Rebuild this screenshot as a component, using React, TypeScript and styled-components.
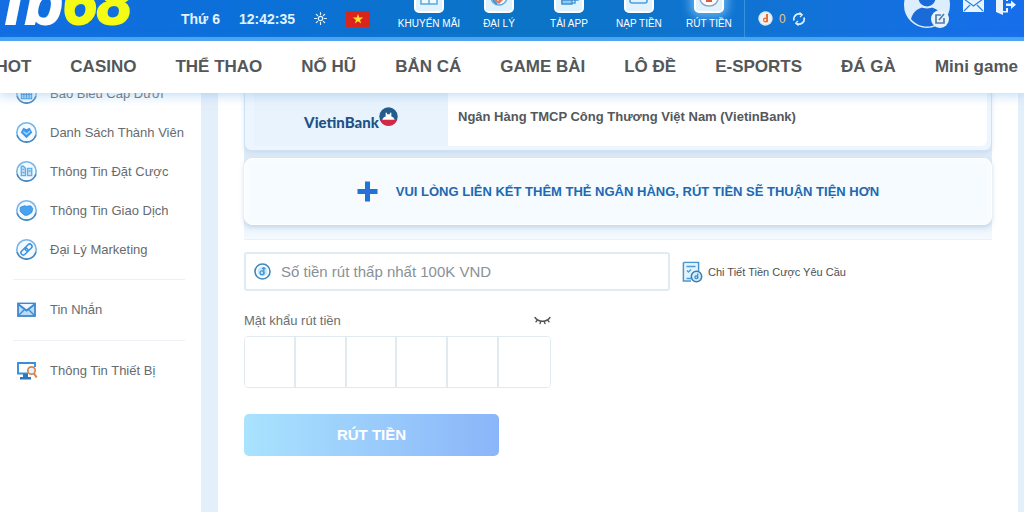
import React from "react";
import styled, { createGlobalStyle } from "styled-components";

const GlobalStyle = createGlobalStyle`
  *, *::before, *::after { box-sizing: border-box; }
  body {
    margin: 0;
    background: #fff;
    color: #5d6268;
    font-family: "Liberation Sans", Arial, sans-serif;
    font-size: 13px;
  }
  a { color: inherit; text-decoration: none; }
  button { font: inherit; border: 0; padding: 0; background: none; color: inherit; cursor: pointer; }
  svg { display: block; flex: none; }
`;

const Page = styled.div`
  min-height: 100vh;
  display: flex;
  flex-direction: column;
  overflow: hidden;
`;

/* ---------- top bar ---------- */

const TopBar = styled.header`
  height: 41px;
  display: flex;
  align-items: flex-end;
  overflow: hidden;
  color: #fff;
  border-bottom: 4px solid #45a3f3;
  background: linear-gradient(90deg, #126ee2 0%, #0b70d8 25%, #0b74c6 50%, #0f74d0 70%, #176eeb 100%);
`;

const Logo = styled.a`
  width: 181px;
  flex: none;
  padding-left: 4px;
  height: 64px;
  line-height: 60px;
  font-size: 62px;
  font-weight: bold;
  font-style: italic;
  white-space: nowrap;
  -webkit-text-stroke: 2px currentColor;
`;

const LogoAccent = styled.span`
  color: #f4fb14;
`;

const StatusGroup = styled.div`
  display: flex;
  align-items: center;
  gap: 19px;
  height: 37px;
  flex: none;
  font-size: 14px;
  font-weight: bold;
  color: #e2f2ff;
`;

const ActionList = styled.nav`
  display: flex;
  margin-left: 24px;
  padding-bottom: 7px;
  border-right: 1px solid #3b90e0;
`;

const Action = styled.a`
  width: 70px;
  display: flex;
  flex-direction: column;
  align-items: center;
  gap: 5px;
  font-size: 10px;
  line-height: 12px;
  white-space: nowrap;
`;

const ActionTile = styled.span<{ $active?: boolean }>`
  width: 30px;
  height: 30px;
  display: flex;
  align-items: flex-end;
  justify-content: center;
  padding-bottom: 3px;
  border-radius: 5px;
  border: 2px solid #fff;
  background: #dff2fe;
  box-shadow: ${(p) => (p.$active ? "0 0 10px 4px rgba(150, 215, 255, 0.6)" : "none")};
`;

const Balance = styled.div`
  display: flex;
  align-items: center;
  gap: 6px;
  height: 37px;
  margin-left: 13px;
  font-size: 12px;
  color: #e5c681;
`;

const Account = styled.div`
  display: flex;
  align-items: flex-start;
  gap: 12px;
  height: 55px;
  margin-left: auto;
  padding-right: 8px;
`;

const IconButton = styled.button`
  padding-top: 16px;
`;

const AvatarButton = styled.button`
  padding-top: 0;
`;

const RefreshButton = styled.button``;

/* ---------- main menu ---------- */

const MainMenu = styled.nav`
  position: relative;
  z-index: 1;
  height: 52px;
  display: flex;
  align-items: center;
  justify-content: flex-end;
  gap: 39px;
  padding-right: 6px;
  background: #fff;
  box-shadow: 0 3px 10px rgba(140, 190, 235, 0.5);
  font-size: 17px;
  font-weight: bold;
  color: #53575a;
  white-space: nowrap;
`;

/* ---------- body ---------- */

const Body = styled.div`
  flex: 1;
  display: flex;
  overflow: hidden;
  background: #e3effa;
`;

const Sidebar = styled.aside`
  width: 201px;
  flex: none;
  background: #fff;
`;

const SideList = styled.ul<{ $ruled?: boolean }>`
  list-style: none;
  margin: ${(p) => (p.$ruled ? "0 16px 0 13px" : "-19px 16px 0 13px")};
  padding: ${(p) => (p.$ruled ? "10px 0 11px" : "0 0 10px")};
  border-top: ${(p) => (p.$ruled ? "1px solid #edf1f5" : "0")};
`;

const SideLink = styled.a`
  height: 39px;
  display: flex;
  align-items: center;
  gap: 12px;
  padding-left: 2px;
  white-space: nowrap;
  color: #666b70;
`;

const Main = styled.main`
  flex: 1;
  min-width: 0;
  margin: 0 6px 0 17px;
  padding: 0 26px 56px;
  background: #fff;
`;

const BankArea = styled.section`
  margin-top: -13px;
  padding-bottom: 14px;
  border-bottom: 1px solid #efeff4;
  background: linear-gradient(#e0ecf8 85%, #f5faff);
`;

const BankCard = styled.div`
  display: flex;
  padding: 5px 4px 4px 9px;
  border: 1px solid #cfe1f3;
  border-radius: 0 0 7px 7px;
  background: #edf6fe;
  box-shadow: 0 2px 5px rgba(150, 185, 220, 0.3);
`;

const BankLogo = styled.div`
  width: 194px;
  flex: none;
  display: flex;
  align-items: center;
  justify-content: center;
  background: #e9f3fd;
`;

const BankWordmark = styled.span`
  margin-top: 12px;
  font-family: Lato, "Liberation Sans", sans-serif;
  font-size: 15px;
  font-weight: 900;
  color: #1d5285;
`;

const BankName = styled.div`
  flex: 1;
  height: 60px;
  display: flex;
  align-items: center;
  padding-left: 10px;
  border-radius: 0 0 6px 0;
  background: #fff;
  font-weight: bold;
  color: #54585c;
`;

const AddCardButton = styled.button`
  width: 100%;
  height: 67px;
  margin-top: 7px;
  display: flex;
  align-items: center;
  justify-content: center;
  gap: 18px;
  border: 1px solid #fff;
  border-radius: 8px;
  background: #f5fbff;
  box-shadow: 0 2px 5px rgba(125, 165, 205, 0.4), inset 0 0 0 5px #f8fcff;
  font-weight: bold;
  color: #2069b2;
`;

const AmountRow = styled.div`
  display: flex;
  align-items: center;
  gap: 12px;
  margin-top: 12px;
`;

const AmountField = styled.label`
  flex: 0 1 426px;
  height: 39px;
  display: flex;
  align-items: center;
  gap: 10px;
  padding: 0 8px;
  border: 2px solid #dfecf4;
  border-radius: 3px;
  background: #fff;
`;

const AmountInput = styled.input`
  flex: 1;
  min-width: 0;
  border: 0;
  outline: 0;
  padding: 0;
  font: 15px "Liberation Sans", Arial, sans-serif;
  color: #54585c;
  &::placeholder { color: #8a9097; opacity: 1; }
`;

const DetailLink = styled.a`
  display: flex;
  align-items: center;
  gap: 5px;
  font-size: 11px;
  color: #4c5054;
  white-space: nowrap;
`;

const PinGroup = styled.fieldset`
  width: 307px;
  max-width: 100%;
  min-width: 0;
  margin: 21px 0 0;
  padding: 0;
  border: 0;
`;

const PinHead = styled.div`
  display: flex;
  align-items: center;
  justify-content: space-between;
  height: 16px;
  color: #6a6f74;
`;

const PinCells = styled.div`
  display: grid;
  grid-template-columns: repeat(6, minmax(0, 1fr));
  height: 52px;
  margin-top: 8px;
  border: 1px solid #e1eaef;
  border-radius: 4px;
  overflow: hidden;
`;

const PinInput = styled.input`
  width: 100%;
  border: 0;
  border-radius: 0;
  outline: 0;
  padding: 0;
  text-align: center;
  font-size: 20px;
  background: #fff;
  &:not(:last-child) { border-right: 2px solid #e1eaef; }
`;

const SubmitButton = styled.button`
  display: block;
  width: 255px;
  height: 42px;
  margin-top: 26px;
  padding-bottom: 2px;
  border-radius: 5px;
  background: linear-gradient(90deg, #a9e3fe, #8bb5f9);
  font-size: 15px;
  font-weight: bold;
  color: #fff;
`;

/* ---------- icons ---------- */

const SunIcon = () => (
  <svg width="13" height="13" viewBox="0 0 13 13" fill="none" stroke="#e2f2ff" strokeWidth="1.2" strokeLinecap="round">
    <circle cx="6.5" cy="6.5" r="2.2" />
    <path d="M6.5.6v2M6.5 10.4v2M.6 6.5h2M10.4 6.5h2M2.3 2.3l1.4 1.4M9.3 9.3l1.4 1.4M10.7 2.3L9.3 3.7M3.7 9.3l-1.4 1.4" />
  </svg>
);

const FlagIcon = () => (
  <svg width="24" height="16" viewBox="0 0 24 16">
    <rect width="24" height="16" fill="#d9251c" />
    <path fill="#ffe22e" d="M12 2.900l1.250 3.700h3.900L14 8.900l1.200 3.700L12 10.300l-3.200 2.300L10 8.900 6.850 6.600h3.900z" />
  </svg>
);

const tileArt: Record<string, React.ReactNode> = {
  gift: <path d="M2 5h16v11H2zM1 1h18v4H1zM10 1v15" fill="#eefaff" stroke="#5aa9dc" strokeWidth="1.500" />,
  agent: (
    <>
      <circle cx="10" cy="9" r="8" fill="#fff" stroke="#63aee0" strokeWidth="1.500" />
      <path d="M4 8l5 5 7-7v4l-6 6-5-4z" fill="#e9745a" />
      <path d="M4 12l4 4M13 4l3 3" stroke="#3f8fd0" strokeWidth="1.800" />
    </>
  ),
  app: (
    <>
      <path d="M3 0h13v15H3z" fill="#e6f5fe" stroke="#4f9fda" strokeWidth="1.600" />
      <path d="M3 12h10v4H3zM12 7h7v5h-7z" fill="#8fcbf2" stroke="#3f90d0" strokeWidth="1.300" />
    </>
  ),
  deposit: (
    <>
      <path d="M1 0v13q0 2 2 2h13q2 0 2-2V3H1" fill="#dff2fe" stroke="#4f9fda" strokeWidth="1.600" />
      <path d="M12 6h7v5h-7q-2-2.500 0-5z" fill="#b5def7" stroke="#4f9fda" strokeWidth="1.200" />
    </>
  ),
  withdraw: (
    <>
      <path d="M1 5v5c0 5 4 8 9 8s9-3 9-8V5z" fill="#fff" stroke="#8fa9bb" strokeWidth="1.500" />
      <path d="M7 2h6v12H7z" fill="#e3573e" />
      <path d="M9 4v8M11 4v8" stroke="#ffb09a" strokeWidth=".8" />
    </>
  ),
};

const TileIcon = ({ kind }: { kind: string }) => (
  <svg width="20" height="20" viewBox="0 0 20 20">{tileArt[kind]}</svg>
);

const CoinIcon = () => (
  <svg width="15" height="15" viewBox="0 0 15 15">
    <circle cx="7.500" cy="7.500" r="7.200" fill="#d7ebf8" />
    <circle cx="7.500" cy="7.500" r="5.600" fill="#f4f1ee" />
    <path d="M8 3h2v8c-2 1-5 .5-5-2s2-3 3-2z" fill="#e2703a" />
    <circle cx="7.200" cy="9" r="1" fill="#fff" />
  </svg>
);

const RefreshIcon = () => (
  <svg width="14" height="14" viewBox="0 0 14 14" fill="none" stroke="#dff1ff" strokeWidth="1.700">
    <path d="M2 8.500A5.200 5.200 0 0 1 9.500 2.500M12 5.500A5.200 5.200 0 0 1 4.500 11.500" />
    <path d="M7.500.5l2.800 2.200-2.300 2.500M6.500 13.500l-2.800-2.200 2.300-2.500" strokeWidth="1.200" />
  </svg>
);

const AvatarIcon = () => (
  <svg width="48" height="48" viewBox="0 0 48 48">
    <circle cx="24" cy="23" r="22" fill="#dcedfb" stroke="#dcedfb" strokeWidth="2" />
    <path d="M8 37c2-8 8-12 16-12s14 4 16 12c-4 5-10 7.500-16 7.500S12 42 8 37z" fill="#1a6ad8" />
    <circle cx="24" cy="16" r="9.500" fill="#1a6ad8" stroke="#dcedfb" strokeWidth="2" />
    <circle cx="37" cy="37" r="9" fill="#e6f3fd" />
    <path d="M38 33h-5v8h8v-5M36 38l5-6" fill="none" stroke="#4f7ea8" strokeWidth="1.700" />
  </svg>
);

const TopMailIcon = () => (
  <svg width="21" height="14" viewBox="0 0 21 14">
    <rect width="21" height="14" rx="1" fill="#e7f5ff" />
    <path d="M1 1l9.500 7L20 1M1 13l6-6M20 13l-6-6" fill="none" stroke="#2d7fe0" strokeWidth="1.200" />
  </svg>
);

const LogoutIcon = () => (
  <svg width="20" height="17" viewBox="0 0 20 17">
    <path d="M0 0h12v3h-2V1.500H7V13h3v-3h2v4.500H7V17L0 14z" fill="#e7f5ff" />
    <path d="M10 5.500h5V2.500L20 6.800l-5 4.200V8h-5z" fill="#e7f5ff" />
  </svg>
);

const sideArt: Record<string, React.ReactNode> = {
  report: <path d="M6 6h10v10H6zM8.500 8v7M11 8v7M13.500 8v7M6 12h10" fill="#a9d6f6" stroke="#4192d9" />,
  members: (
    <>
      <path d="M11 16.500L5.500 11 8 6.500l3 1.500 3-1.500 2.500 4.500z" fill="#3d97ea" />
      <path d="M8 10l3 2.500 3.500-3" fill="none" stroke="#a7d6fb" strokeWidth="1.200" />
    </>
  ),
  bets: <path d="M6 6h2l2 2v7H6zM7 9h2M7 12h2M12 8h4v7h-4zM13 10.500h2" fill="#c5e4fa" stroke="#63aee8" strokeWidth="1.300" />,
  trades: <path d="M5 8l4-1.500 2 .5 4-.5 2 2.500-1 4-4 2.500h-3l-4-3.500z" fill="#49a2ef" stroke="#318be0" strokeWidth=".8" />,
  link: (
    <g transform="rotate(-45 11 11)" fill="none" stroke="#3e93dd" strokeWidth="1.500">
      <rect x="4.500" y="8.800" width="7.500" height="4.400" rx="2.200" />
      <rect x="10" y="8.800" width="7.500" height="4.400" rx="2.200" />
    </g>
  ),
};

const RoundIcon = ({ kind }: { kind: string }) => (
  <svg width="23" height="23" viewBox="0 0 22 22">
    <circle cx="11" cy="11" r="9.300" fill="#f3faff" stroke="#74b6e8" strokeWidth="1.500" />
    <path d="M2 13.500a9.400 9.400 0 0 0 18 0" fill="none" stroke="#4a86bb" strokeWidth="1.500" />
    {sideArt[kind]}
  </svg>
);

const MessageIcon = () => (
  <svg width="23" height="23" viewBox="0 0 23 23" fill="none" stroke="#3d88d0" strokeWidth="1.800">
    <rect x="3" y="5.500" width="17" height="12.500" fill="#b8dcf7" />
    <path d="M3 6l8.500 6.500L20 6" fill="#eef8ff" />
    <path d="M3.500 17.500l6-6M19.500 17.500l-6-6" strokeWidth="1.400" />
  </svg>
);

const DeviceIcon = () => (
  <svg width="23" height="23" viewBox="0 0 23 23" fill="none">
    <path d="M13 14.500H3V4h17v4" stroke="#3a8ddc" strokeWidth="1.900" />
    <path d="M8 15h5v3.500H8zM5 18h11v2.500H5z" fill="#2e75be" />
    <circle cx="16.500" cy="11.500" r="3.700" stroke="#d9824a" strokeWidth="1.700" fill="#e4f3fe" />
    <path d="M19 14.500l2.700 4" stroke="#d9824a" strokeWidth="2" />
  </svg>
);

const BankEmblem = () => (
  <svg width="19" height="19" viewBox="0 0 20 20">
    <circle cx="10" cy="10" r="9.700" fill="#225d8e" />
    <path d="M.9 13.500h18.200A9.700 9.700 0 0 1 .9 13.500z" fill="#d32744" />
    <path d="M7 6h1.500v1.500h3V6H13v4c2 .6 3 2 3.500 3.500H3.500C4 12 5 10.600 7 10z" fill="#fff" />
  </svg>
);

const PlusIcon = () => (
  <svg width="21" height="21" viewBox="0 0 21 21">
    <path d="M8 .5h5V8h7.500v5H13v7.500H8V13H.5V8H8z" fill="#2272d8" />
  </svg>
);

const MoneyIcon = () => (
  <svg width="17" height="17" viewBox="0 0 17 17" fill="none">
    <circle cx="8.500" cy="8.500" r="7.500" stroke="#3f88bb" strokeWidth="1.600" />
    <circle cx="8.500" cy="8.500" r="5" fill="#c9e7fb" />
    <path d="M9.800 4v7.500M8 5.500h3.500" stroke="#3f97dc" strokeWidth="1.300" />
    <circle cx="8" cy="9.800" r="1.900" stroke="#3f97dc" strokeWidth="1.300" />
  </svg>
);

const DetailIcon = () => (
  <svg width="21" height="22" viewBox="0 0 21 22" fill="none">
    <path d="M1.500 1.500h15v13M1.500 1.500V20H9" stroke="#4a95cd" strokeWidth="1.700" />
    <path d="M2.500 2.500h13V14L9 19H2.500z" fill="#e2f3fd" />
    <path d="M4.500 5.500h9M5 9.500l1.500 1.500L9 8.500M4.500 17.500H9" stroke="#4a9bd8" strokeWidth="1.300" />
    <circle cx="14.500" cy="15.500" r="5.200" fill="#d3ecfb" stroke="#3c7eae" strokeWidth="1.500" />
    <path d="M15.700 12.500v5" stroke="#368cd0" strokeWidth="1.200" />
    <circle cx="14.300" cy="16.300" r="1.400" stroke="#368cd0" strokeWidth="1.200" />
  </svg>
);

const EyeClosedIcon = () => (
  <svg width="17" height="9" viewBox="0 0 17 9" fill="none" stroke="#50565c" strokeWidth="1.400" strokeLinecap="round">
    <path d="M1 1.500c3.500 5 11.500 5 15 0M3.500 4L2 5.800M6.700 5.500L6 7.600M10.300 5.500l.7 2.100M13.500 4L15 5.800" />
  </svg>
);

/* ---------- data ---------- */

const actions = [
  { label: "KHUYẾN MÃI", kind: "gift" },
  { label: "ĐẠI LÝ", kind: "agent" },
  { label: "TẢI APP", kind: "app" },
  { label: "NẠP TIỀN", kind: "deposit" },
  { label: "RÚT TIỀN", kind: "withdraw", active: true },
];

const menu = ["HOT", "CASINO", "THỂ THAO", "NỔ HŨ", "BẮN CÁ", "GAME BÀI", "LÔ ĐỀ", "E-SPORTS", "ĐÁ GÀ", "Mini game"];

const sideItems = [
  { label: "Báo Biểu Cấp Dưới", kind: "report" },
  { label: "Danh Sách Thành Viên", kind: "members" },
  { label: "Thông Tin Đặt Cược", kind: "bets" },
  { label: "Thông Tin Giao Dịch", kind: "trades" },
  { label: "Đại Lý Marketing", kind: "link" },
];

export default function App() {
  return (
    <Page>
      <GlobalStyle />
      <TopBar>
        <Logo href="#">
          fb<LogoAccent>68</LogoAccent>
        </Logo>
        <StatusGroup>
          <span>Thứ 6</span>
          <time>12:42:35</time>
          <SunIcon />
          <FlagIcon />
        </StatusGroup>
        <ActionList>
          {actions.map((a) => (
            <Action href="#" key={a.label}>
              <ActionTile $active={a.active}>
                <TileIcon kind={a.kind} />
              </ActionTile>
              {a.label}
            </Action>
          ))}
        </ActionList>
        <Balance>
          <CoinIcon />
          <span>0</span>
          <RefreshButton type="button" aria-label="Làm mới số dư">
            <RefreshIcon />
          </RefreshButton>
        </Balance>
        <Account>
          <AvatarButton type="button" aria-label="Tài khoản">
            <AvatarIcon />
          </AvatarButton>
          <IconButton type="button" aria-label="Tin nhắn">
            <TopMailIcon />
          </IconButton>
          <IconButton type="button" aria-label="Đăng xuất">
            <LogoutIcon />
          </IconButton>
        </Account>
      </TopBar>

      <MainMenu>
        {menu.map((m) => (
          <a href="#" key={m}>{m}</a>
        ))}
      </MainMenu>

      <Body>
        <Sidebar>
          <SideList>
            {sideItems.map((s) => (
              <li key={s.label}>
                <SideLink href="#">
                  <RoundIcon kind={s.kind} />
                  {s.label}
                </SideLink>
              </li>
            ))}
          </SideList>
          <SideList $ruled>
            <li>
              <SideLink href="#">
                <MessageIcon />
                Tin Nhắn
              </SideLink>
            </li>
          </SideList>
          <SideList $ruled>
            <li>
              <SideLink href="#">
                <DeviceIcon />
                Thông Tin Thiết Bị
              </SideLink>
            </li>
          </SideList>
        </Sidebar>

        <Main>
          <BankArea>
            <BankCard>
              <BankLogo>
                <BankWordmark>VietinBank</BankWordmark>
                <BankEmblem />
              </BankLogo>
              <BankName>Ngân Hàng TMCP Công Thương Việt Nam (VietinBank)</BankName>
            </BankCard>
            <AddCardButton type="button">
              <PlusIcon />
              VUI LÒNG LIÊN KẾT THÊM THẺ NGÂN HÀNG, RÚT TIỀN SẼ THUẬN TIỆN HƠN
            </AddCardButton>
          </BankArea>

          <AmountRow>
            <AmountField>
              <MoneyIcon />
              <AmountInput type="text" inputMode="numeric" aria-label="Số tiền rút" placeholder="Số tiền rút thấp nhất 100K VND" />
            </AmountField>
            <DetailLink href="#">
              <DetailIcon />
              Chi Tiết Tiền Cược Yêu Cầu
            </DetailLink>
          </AmountRow>

          <PinGroup aria-labelledby="pin-label">
            <PinHead>
              <span id="pin-label">Mật khẩu rút tiền</span>
              <button type="button" aria-label="Hiện mật khẩu">
                <EyeClosedIcon />
              </button>
            </PinHead>
            <PinCells>
              {[1, 2, 3, 4, 5, 6].map((n) => (
                <PinInput key={n} type="password" inputMode="numeric" maxLength={1} aria-label={`Mật khẩu rút tiền, số ${n}`} />
              ))}
            </PinCells>
          </PinGroup>

          <SubmitButton type="button">RÚT TIỀN</SubmitButton>
        </Main>
      </Body>
    </Page>
  );
}
